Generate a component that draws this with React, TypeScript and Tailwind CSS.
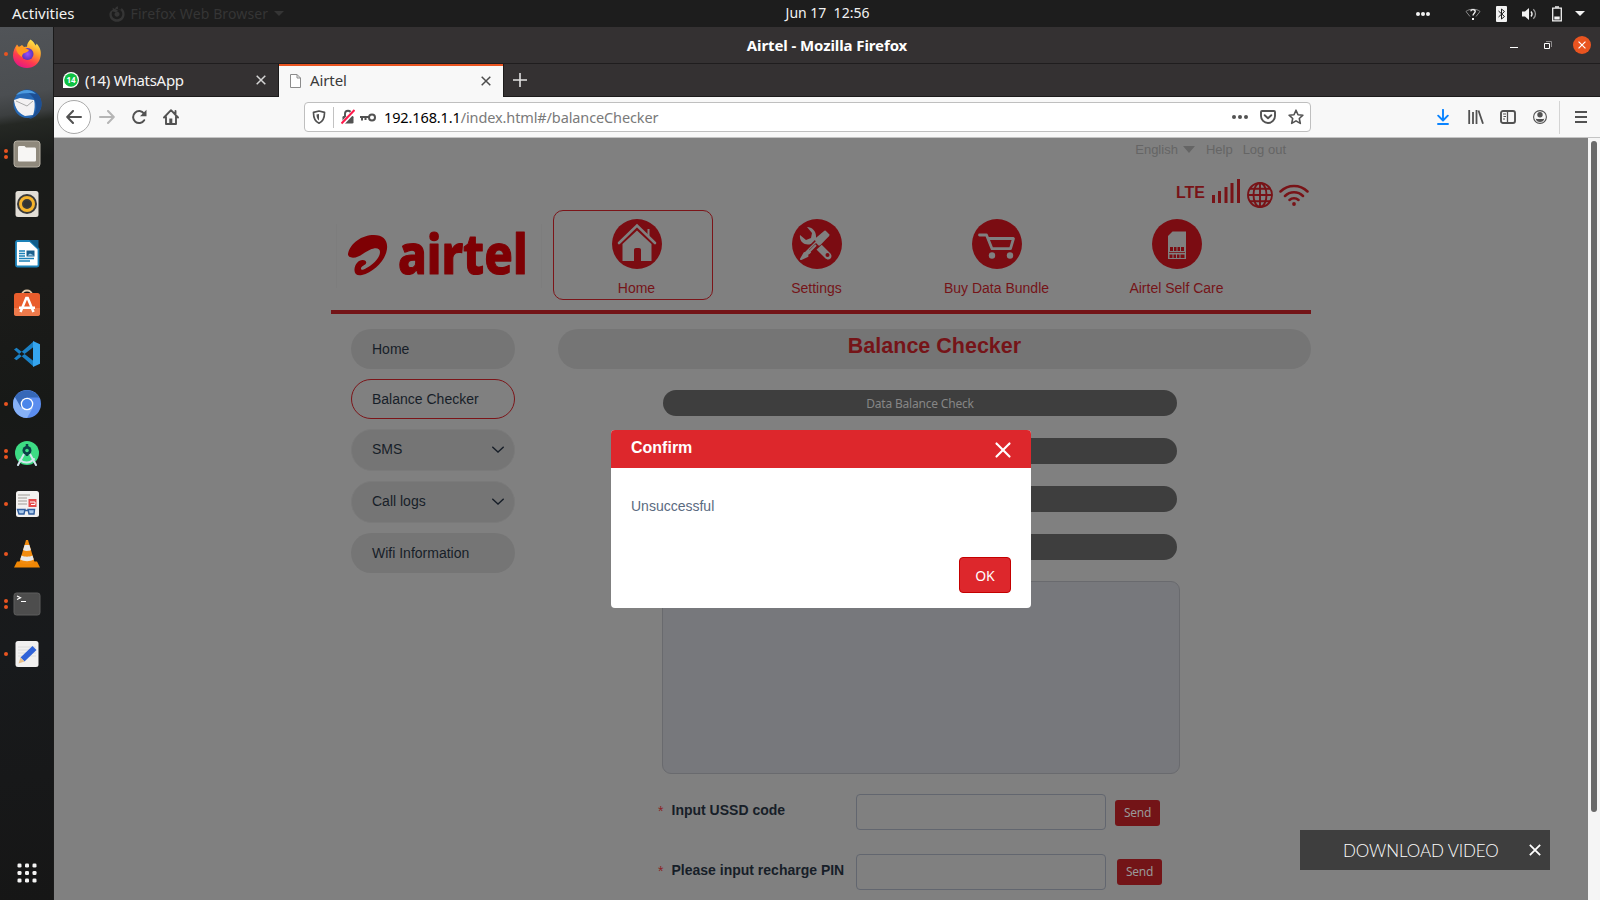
import type { ReactNode } from "react";
import { X } from "lucide-react";

const ubuntu = "font-['Noto_Sans','Open_Sans',sans-serif]";

function CloseGlyph({ className }: { className: string }) {
  return (
    <svg viewBox="0 0 10 10" className={className} fill="none" stroke="currentColor" strokeWidth="1.5">
      <path d="M.7.7l8.6 8.6M9.3.7L.7 9.3" />
    </svg>
  );
}

/* ---------- GNOME top bar ---------- */

function TopBar() {
  return (
    <header className={`grid h-[27px] grid-cols-[1fr_auto_1fr] items-center bg-[#1d1d1d] text-[#f2f2f2] ${ubuntu}`}>
      <div className="flex items-center pl-3">
        <span className="text-[15px] leading-none">Activities</span>
        <div className="ml-[34px] flex items-center text-[#353535]">
          <svg viewBox="0 0 16 16" className="h-4 w-4" fill="currentColor">
            <path fillRule="evenodd" d="M8.500 0c.5 1.200.6 2 .6 3.200 2.500.2 4.200 2 4.200 4.800 0 3-2.300 5.200-5.300 5.200S2.700 11 2.700 8c0-1 .3-2 .9-2.800L7 6.500 9 4 6 3.200C6.300 1.800 7.300.8 8.500 0zM3.500 1.800l.3 2C1.500 5 .4 6.500.4 8.500.4 12.700 3.800 15.800 8 15.800s7.600-3.200 7.600-7.600c0-2.600-1-4.600-3-6.200L12 3.800C10.500 3 8 3 6.500 3.200z M8 5.500C6.500 6 5.500 7 5.500 8.300c0 1.400 1.100 2.400 2.500 2.400s2.600-1 2.600-2.400C10.600 6.800 9.500 5.700 8 5.500z" />
          </svg>
          <span className="ml-[6px] text-[14px] leading-none tracking-[0.12px]">Firefox Web Browser</span>
          <svg viewBox="0 0 10 5" className="ml-[6px] h-[5px] w-[10px]" fill="currentColor">
            <path d="M0 0h10L5 5z" />
          </svg>
        </div>
      </div>
      <span className="pb-px pl-[55px] text-[14px] leading-none whitespace-pre">Jun 17  12:56</span>
      <div className="flex items-center justify-end">
        <svg viewBox="0 0 14 4" className="h-1 w-[14px]" fill="currentColor">
          <circle cx="2" cy="2" r="2" /><circle cx="7" cy="2" r="2" /><circle cx="12" cy="2" r="2" />
        </svg>
        <svg viewBox="0 0 16 14" className="ml-[35px] h-[14px] w-4" fill="none" stroke="currentColor">
          <path d="M5 9.500L1 4.500C3.800 1.500 12.200 1.500 15 4.500L11 9.500" stroke="#8a8a8a" />
          <path d="M5.800 4.200C6 2 10.300 2 10.200 4.500 10.100 6.200 8 6.200 8 8.500" strokeWidth="1.400" />
          <path d="M8 11v2" strokeWidth="2" />
        </svg>
        <svg viewBox="0 0 11 16" className="ml-[15px] h-4 w-[11px]">
          <rect width="11" height="16" rx="1" fill="#f2f2f2" />
          <path d="M2.500 5l6 5.500-3 2.500V3l3 2.500-6 5.500" fill="none" stroke="#1d1d1d" />
        </svg>
        <svg viewBox="0 0 15 14" className="ml-[15px] h-[14px] w-[15px]" fill="none" stroke="currentColor">
          <path d="M0 4.500h3L7 1v12L3 9.500H0z" fill="currentColor" stroke="none" />
          <path d="M9 4.500c1.300 1.500 1.300 3.500 0 5" strokeWidth="1.300" />
          <path d="M11.300 2.200c2.900 2.800 2.900 6.800 0 9.600" stroke="#9a9a9a" strokeWidth="1.300" />
        </svg>
        <svg viewBox="0 0 10 16" className="ml-[15px] h-4 w-[10px]" fill="none" stroke="currentColor">
          <path d="M.7 2.200h8.600v12.600H.7z" strokeWidth="1.300" />
          <path d="M3 1h4" strokeWidth="1.500" />
          <path d="M2.300 10.500h5.400v3H2.300z" fill="currentColor" stroke="none" />
        </svg>
        <svg viewBox="0 0 10 5" className="mr-[15px] ml-[13px] h-[5px] w-[10px]" fill="currentColor">
          <path d="M0 0h10L5 5z" />
        </svg>
      </div>
    </header>
  );
}

/* ---------- Dock ---------- */

function DockItem({ dots = 0, children }: { dots?: number; children: ReactNode }) {
  return (
    <div className="flex h-[50px] items-center">
      <div className="flex w-3 flex-col items-center gap-[2px]">
        {dots > 0 && <i className="h-1 w-1 rounded-full bg-[#e95420]" />}
        {dots > 1 && <i className="h-1 w-1 rounded-full bg-[#e95420]" />}
      </div>
      <svg viewBox="0 0 30 30" className="h-[30px] w-[30px]">{children}</svg>
    </div>
  );
}

function Dock() {
  return (
    <nav className="flex w-[54px] shrink-0 flex-col justify-between border-r border-[#1a1a1a] bg-[linear-gradient(172deg,#515458_0px,#4b4e51_68px,#3c3f40_88px,#252824_98px,#191b19_135px,#1b1b19_260px,#171917_380px,#191919_440px,#181a1c_620px,#161616_100%)] bg-[linear-gradient(170deg,#52555a_0px,#4b4e51_75px,#404344_88px,#262925_97px,#191b19_140px,#1b1b18_260px,#171816_380px,#191919_460px,#171a1c_640px,#161616_100%)] pt-[2px] pb-[17px]">
      <div>
        <DockItem dots={1}>
          <defs>
            <linearGradient id="fx" x1=".8" y1="0" x2=".3" y2="1">
              <stop offset="0" stopColor="#fff44f" /><stop offset=".4" stopColor="#ff9a2b" />
              <stop offset=".7" stopColor="#ff3b4e" /><stop offset="1" stopColor="#e31587" />
            </linearGradient>
            <radialGradient id="fp"><stop offset="0" stopColor="#9a4dff" /><stop offset="1" stopColor="#5a35b8" /></radialGradient>
          </defs>
          <path d="M18.500.5c3 2 4 4 5 6 1-1 1-2 1-2 4 4 5 9 4 13-1 7-7 11.500-13.500 11.500C7 29 1 23.500 1 16.500 1 12 3 8 5 5.500L7 8l3-2 2 2c2-.5 3-.3 3-.3C15 4.500 16.500 2.500 18.500.5z" fill="url(#fx)" />
          <circle cx="15.500" cy="15" r="6" fill="url(#fp)" />
          <path d="M4 8c4 0 6-1 9 1l4 2c-1 2-3 2-4 3-2 0-3 2-3 4-3-2-6-5-6-10z" fill="#ff9a1f" />
        </DockItem>
        <DockItem>
          <circle cx="15.500" cy="15" r="14" fill="#2668b4" />
          <path d="M12 1c9-2 17 4 17.500 13S23 29 17 30c6-4 8-9 7-15S18 4 12 1z" fill="#1d4f94" />
          <path d="M4 6C9 0 19-1 24 5c-6-2-14-1-20 1z" fill="#4c9be0" />
          <path d="M2 11L8 9l14 2c1 3 1 10-1 15l-8 1C6 24 3 19 2 11z" fill="#f3f1f2" />
          <path d="M4 12l11 5 6-5" stroke="#aaa" fill="none" />
        </DockItem>
        <DockItem dots={2}>
          <rect x="2" y="2" width="26" height="26" rx="3" fill="#8f897c" stroke="#b5afa3" />
          <path d="M6 8.500c0-1 .6-1.500 1.500-1.500h5l1.500 1.500h8.500c1 0 1.500.6 1.500 1.500v11c0 1-.6 1.500-1.500 1.500h-15C6.500 22.500 6 22 6 21z" fill="#f7f6f4" />
        </DockItem>
        <DockItem>
          <rect x="3.500" y="2" width="23" height="26" rx="2.500" fill="#e2ded6" />
          <circle cx="15" cy="15" r="10" fill="#3b3b3b" />
          <circle cx="15" cy="15" r="6.500" fill="none" stroke="#f6b42c" strokeWidth="3" />
          <circle cx="15" cy="15" r="3.200" fill="#333" />
        </DockItem>
        <DockItem>
          <path d="M5.500 2H18l8.500 8v16c0 1-.6 1.500-1.500 1.500H5.500C4.600 27.500 4 27 4 26V3.500C4 2.500 4.600 2 5.500 2z" fill="#fff" stroke="#1b81b8" strokeWidth="1.800" />
          <path d="M17 1h9.500v9z" fill="#0f5c8a" />
          <path d="M7 12h6M7 14.500h6M7 17h6M7 19.500h15M7 22h11" stroke="#1b81b8" strokeWidth="1.300" />
          <path d="M14.500 11.500h8v6h-8z" fill="#1b5f8c" />
          <path d="M15.500 16.500l2.500-2 4 2z" fill="#9fd0ec" />
        </DockItem>
        <DockItem>
          <path d="M10 6c0-6 10-6 10 0" fill="none" stroke="#e2c8a8" strokeWidth="1.800" />
          <rect x="2" y="4" width="26" height="23" rx="2.500" fill="#e95d2c" />
          <path d="M2 19h26v5.500c0 1.500-1 2.500-2.500 2.500h-21C3 27 2 26 2 24.500z" fill="#ee7a4b" />
          <path d="M8.500 23l5.800-14h1.400l5.800 14M7 18.800h16" fill="none" stroke="#fff" strokeWidth="2.500" />
        </DockItem>
        <DockItem>
          <path d="M2 10.500l2.500-1.800L21.500 22v5.500zM2 19.500l2.500 1.800L21.500 8V2.500z" fill="#1b80c4" />
          <path d="M21 2l7 3.300v19.400L21 28z" fill="#35a5ee" />
        </DockItem>
        <DockItem dots={1}>
          <circle cx="15" cy="15" r="14" fill="#5b8def" />
          <path d="M15 15L2.900 8A14 14 0 0015 29l6-10.500z" fill="#86b1f7" />
          <path d="M2.900 8A14 14 0 0127.100 8.500H15L9 18.500z" fill="#3668b8" />
          <circle cx="15" cy="15" r="6.300" fill="#fff" />
          <circle cx="15" cy="15" r="5" fill="#4a86ea" />
        </DockItem>
        <DockItem dots={2}>
          <circle cx="15" cy="14" r="12" fill="#3ddc84" />
          <path d="M6 26l6-11M24 26l-6-11M8 21c4 3.500 10 3.500 14-1" fill="none" stroke="#d5e6ee" strokeWidth="2" strokeLinecap="round" />
          <circle cx="15" cy="11.500" r="4.500" fill="#0a4047" />
          <path d="M15 5v12" stroke="#0a4047" strokeWidth="2.500" />
          <circle cx="15" cy="11.500" r="1.800" fill="#3ddc84" />
        </DockItem>
        <DockItem dots={1}>
          <rect x="4" y="2" width="23" height="26" rx="2.500" fill="#f3f1f0" />
          <path d="M6 6h12M6 9h9M6 12h9M6 15h9" stroke="#bcb8b4" strokeWidth="1.300" />
          <path d="M16.500 10h8v8h-8z" fill="#e64b4b" />
          <path d="M18 13h5v2.500h-4" stroke="#fff" fill="none" />
          <path d="M5.500 20.500H13l-1 4.500H7zM16 20.500h6.500L22 25h-5zM12.500 21.500h4" fill="#a9c8ea" stroke="#315e9e" strokeWidth="1.400" />
        </DockItem>
        <DockItem dots={1}>
          <path d="M5 22.500h20l3 6H2z" fill="#f08705" />
          <path d="M14 1h2l6.500 22c-3 3-12 3-15 0z" fill="#f28c0f" />
          <path d="M12.600 6h4.800l1.500 5c-2 1.200-5.800 1.200-7.800 0zM9.500 16.500c3 1.600 8 1.600 11 0l1.300 4c-4 2.300-9.500 2.300-13.600 0z" fill="#e8e8e8" />
        </DockItem>
        <DockItem dots={2}>
          <rect x="2" y="4" width="26" height="22" rx="2.500" fill="#4d4d4d" stroke="#5e5e5e" />
          <path d="M5 7l3.500 1.800L5 10.500M9 12.500h5" fill="none" stroke="#fff" strokeWidth="1.200" />
        </DockItem>
        <DockItem dots={1}>
          <rect x="3.500" y="2" width="23" height="26" rx="2.500" fill="#f1f0f0" />
          <path d="M6 8h18M6 11h18M6 14h18M6 17h18" stroke="#dcdcdc" />
          <path d="M8.500 18.500L20.500 7l4 4-12 11.500z" fill="#2f62d8" />
          <path d="M8.500 18.500l4 4-6 2z" fill="#e8c08a" />
        </DockItem>
      </div>
      <svg viewBox="0 0 20 20" className="ml-[17px] h-5 w-5" fill="#f4f4f4">
        <rect x=".5" y=".5" width="4" height="4" rx="1.300" /><rect x="8" y=".5" width="4" height="4" rx="1.300" /><rect x="15.500" y=".5" width="4" height="4" rx="1.300" />
        <rect x=".5" y="8" width="4" height="4" rx="1.300" /><rect x="8" y="8" width="4" height="4" rx="1.300" /><rect x="15.500" y="8" width="4" height="4" rx="1.300" />
        <rect x=".5" y="15.500" width="4" height="4" rx="1.300" /><rect x="8" y="15.500" width="4" height="4" rx="1.300" /><rect x="15.500" y="15.500" width="4" height="4" rx="1.300" />
      </svg>
    </nav>
  );
}

/* ---------- Firefox window ---------- */

function TitleBar() {
  return (
    <div className="grid h-[37px] grid-cols-[1fr_auto_1fr] items-center border-b border-[#1f1d1e] bg-[#343132] text-white">
      <span />
      <span className={`pt-px text-[15px] leading-none font-bold tracking-[-0.1px] ${ubuntu}`}>Airtel - Mozilla Firefox</span>
      <div className="flex items-center justify-end pr-[9px]">
        <i className="mt-1 h-px w-2 bg-white" />
        <svg viewBox="0 0 8 8" className="ml-[26px] h-2 w-2" fill="none">
          <path d="M2 .5h5.500V6" stroke="#8d8b8c" />
          <path d="M.5 2.500h5v5h-5z" stroke="#fff" />
        </svg>
        <div className="ml-[21px] flex h-[18px] w-[18px] items-center justify-center rounded-full bg-[#e95420]">
          <CloseGlyph className="h-2 w-2" />
        </div>
      </div>
    </div>
  );
}

function TabStrip() {
  return (
    <div className={`flex h-[33px] items-stretch bg-[#343132] text-[15px] leading-none ${ubuntu}`}>
      <div className="flex w-[225px] items-center border-r border-b border-[#1c1b1b] pl-[9px] text-[#f4f4f4]">
        <svg viewBox="0 0 16 16" className="h-4 w-4">
          <path d="M0 16V8a8 8 0 118 8z" fill="#fff" />
          <circle cx="8" cy="8" r="6.800" fill="#0fc143" />
          <text x="8" y="10.800" textAnchor="middle" fontSize="8" fontWeight="700" fill="#fff">14</text>
        </svg>
        <span className="ml-[6px] tracking-[-0.27px]">(14) WhatsApp</span>
        <CloseGlyph className="mr-3 ml-auto h-[10px] w-[10px] text-[#d5d5d5]" />
      </div>
      <div className="flex w-[224px] items-center border-t-2 border-[#e95420] bg-[#f8f8f8] pb-[2px] pl-[11px] text-[#3a3a3a]">
        <svg viewBox="0 0 11 14" className="h-[14px] w-[11px]" fill="#fff" stroke="#8c8c8c">
          <path d="M.5.500H7L10.500 4v9.500H.5zM7 .5V4h3.500" />
        </svg>
        <span className="ml-[9px] tracking-[-0.1px]">Airtel</span>
        <CloseGlyph className="mr-3 ml-auto h-[10px] w-[10px] text-[#4c4c4c]" />
      </div>
      <div className="flex flex-1 items-center border-b border-l border-[#1c1b1b] pl-[9px]">
        <svg viewBox="0 0 14 14" className="h-[14px] w-[14px]" stroke="#e2e2e2" strokeWidth="1.600"><path d="M7 0v14M0 7h14" /></svg>
      </div>
    </div>
  );
}

function Toolbar() {
  return (
    <div className="flex h-[41px] items-center border-b border-[#c4c4c4] bg-[#f8f8f8] text-[#525252]">
      <div className="ml-[3px] flex h-[34px] w-[34px] items-center justify-center rounded-full border border-[#a9a9a9] bg-white">
        <svg viewBox="0 0 16 14" className="h-[14px] w-4" fill="none" stroke="currentColor" strokeWidth="2" strokeLinecap="round" strokeLinejoin="round">
          <path d="M15 7H1.500M7 1L1.200 7 7 13" />
        </svg>
      </div>
      <svg viewBox="0 0 16 14" className="ml-2 h-[14px] w-4" fill="none" stroke="#b5b5b5" strokeWidth="2" strokeLinecap="round" strokeLinejoin="round">
        <path d="M1 7h13.500M9 1l5.800 6L9 13" />
      </svg>
      <svg viewBox="0 0 16 16" className="ml-4 h-4 w-4" fill="none" stroke="currentColor" strokeWidth="2" strokeLinecap="round">
        <path d="M13.200 11.200A6 6 0 1113 4.600" />
        <path d="M15.500.800v6.400H9z" fill="currentColor" stroke="none" />
      </svg>
      <svg viewBox="0 0 16 16" className="ml-4 h-4 w-4" fill="none" stroke="currentColor" strokeWidth="1.900" strokeLinejoin="round" strokeLinecap="round">
        <path d="M1 8.500L8 1.200l7 7.300M3 7.500V15h10V7.500M12.500 2v3" />
        <path d="M7.800 14.500V9.500" strokeWidth="3" strokeLinecap="butt" />
      </svg>

      <div className="ml-[125px] flex h-[30px] w-[1007px] items-center rounded-[4px] border border-[#bfbfbf] bg-white">
        <svg viewBox="0 0 14 14" className="ml-[7px] h-[14px] w-[14px]" fill="none" stroke="currentColor" strokeWidth="1.700">
          <path d="M7 1l5.500 1.300C12.600 8 11 11.500 7 13.200 3 11.500 1.400 8 1.500 2.300z" strokeLinejoin="round" />
          <path d="M7 4v6.400C5 9 4.500 7 4.500 4.500z" fill="currentColor" stroke="none" />
        </svg>
        <i className="ml-[7px] h-[21px] w-px bg-[#c2c2c2]" />
        <svg viewBox="0 0 14 16" className="ml-[7px] h-4 w-[14px]" fill="none">
          <rect x="1.500" y="7" width="11" height="7.500" rx="1.300" fill="#525252" />
          <path d="M4 7V4.800a3 3 0 016 0V7" stroke="#525252" strokeWidth="1.900" />
          <path d="M.5 15.500L13.500 1.500" stroke="#fff" strokeWidth="4" />
          <path d="M.5 14.500L13.500 1" stroke="#ff1a4b" strokeWidth="2" />
        </svg>
        <svg viewBox="0 0 16 9" className="ml-[5px] h-[9px] w-4" fill="none" stroke="currentColor" strokeWidth="2">
          <circle cx="12" cy="4.500" r="3" />
          <path d="M9 4H0M2 4v3.500M5.500 4v3" />
        </svg>
        <span className={`ml-2 text-[14.500px] leading-none tracking-[-0.12px] text-[#7a7a7a] ${ubuntu}`}>
          <span className="text-black">192.168.1.1</span><span>/index.html#/balanceChecker</span>
        </span>
        <svg viewBox="0 0 16 4" className="ml-auto h-1 w-4" fill="currentColor">
          <circle cx="2" cy="2" r="2" /><circle cx="8" cy="2" r="2" /><circle cx="14" cy="2" r="2" />
        </svg>
        <svg viewBox="0 0 16 14" className="ml-3 h-[14px] w-4" fill="none" stroke="currentColor" strokeWidth="1.900" strokeLinecap="round" strokeLinejoin="round">
          <path d="M2 1h12c.6 0 1 .4 1 1v4a7 7 0 01-14 0V2c0-.6.400-1 1-1z" />
          <path d="M4.700 5.200L8 8.300l3.300-3.100" />
        </svg>
        <svg viewBox="0 0 16 16" className="mr-[6px] ml-3 h-4 w-4" fill="none" stroke="currentColor" strokeWidth="1.600" strokeLinejoin="round">
          <path d="M8 1.200l2 4.500 4.900.5-3.600 3.300 1 4.900L8 11.900l-4.300 2.500 1-4.900L1.100 6.200 6 5.700z" />
        </svg>
      </div>

      <div className="ml-auto flex items-center pr-[13px]">
        <svg viewBox="0 0 12 16" className="h-4 w-3" fill="none" stroke="#0a84ff" strokeWidth="1.900" strokeLinecap="round" strokeLinejoin="round">
          <path d="M6 .8v10.500M1.200 6.700L6 11.500l4.800-4.800M1 15h10" />
        </svg>
        <svg viewBox="0 0 16 14" className="ml-[19px] h-[14px] w-4" stroke="currentColor" strokeWidth="1.800">
          <path d="M1.200 0v14M5 2v12M8.500 0v14M10.500.5L15 13.700" />
        </svg>
        <svg viewBox="0 0 16 14" className="ml-4 h-[14px] w-4" fill="none" stroke="currentColor">
          <rect x="1" y="1" width="14" height="12" rx="2" strokeWidth="1.900" />
          <path d="M7.500 1v12" strokeWidth="1.300" /><path d="M3 4h3M3.500 6.500H6M3 9h2" />
        </svg>
        <svg viewBox="0 0 14 14" className="ml-[17px] h-[14px] w-[14px]" fill="none" stroke="currentColor">
          <circle cx="7" cy="7" r="6.400" strokeWidth="1.100" />
          <circle cx="7" cy="4.800" r="2.700" fill="currentColor" stroke="none" />
          <path d="M2.700 8.500c1 .8 2.500.5 4.300.5s3.300.3 4.300-.5C11 11 9.200 12 7 12S3 11 2.700 8.500z" fill="currentColor" stroke="none" />
        </svg>
        <i className="ml-3 h-[33px] w-px bg-[#d4d4d4]" />
        <svg viewBox="0 0 12 12" className="ml-[15px] h-3 w-3" stroke="currentColor" strokeWidth="2"><path d="M0 1h12M0 6h12M0 11h12" /></svg>
      </div>
    </div>
  );
}

/* ---------- Router admin page ---------- */

function Logo() {
  return (
    <svg viewBox="0 0 206 64" className="h-16 w-[206px] overflow-visible text-[#7e0004]" fill="currentColor">
      <path d="M.5 0v64M205.500 0v64" stroke="#7b7b7b" strokeWidth=".6" />
      <path d="M12 30C14 19 26 11 38 11c9 0 14 5 13 14-1.500 12-14 23.500-25 26-5 1-8-1-7.500-6 .5-5 4-9 8-9 3.500 0 4.500 2 3.200 4-1.500 1.500-4.700 2.500-4.700 4.500 0 2 2.500 1.500 5-.2C37 40.500 44 34 44 28c0-4.500-5-4.500-10-2.300-6 2.500-10.500 8-17 8-3.500 0-5.200-1.500-5-3.700z" />
      <text x="62" y="49.800" textLength="129.500" lengthAdjust="spacingAndGlyphs" fontSize="56" fontWeight="800" stroke="currentColor" strokeWidth="1.200" strokeLinejoin="round" className={ubuntu}>airtel</text>
    </svg>
  );
}

function HomeIcon() {
  return (
    <svg viewBox="0 0 50 50" className="h-[50px] w-[50px]">
      <circle cx="25" cy="25" r="25" fill="#7b0c12" />
      <path d="M7 24L25 6.500 43 24" fill="none" stroke="#808080" strokeWidth="2.600" strokeLinecap="round" />
      <path d="M35.500 16v-6h2v8z" fill="#808080" />
      <path d="M10.500 25L25 11.500 39.500 25v17H29V31c0-1.200-.8-2-2-2h-3c-1.200 0-2 .8-2 2v11H10.500z" fill="#808080" />
    </svg>
  );
}
function SettingsIcon() {
  return (
    <svg viewBox="0 0 50 50" className="h-[50px] w-[50px]">
      <circle cx="25" cy="25" r="25" fill="#7b0c12" />
      <path d="M15 8c5 0 9 4 9 9v3l14 14c4 4-1 9-5 5L19 25c-6 2-12-2-11-9l6 5 5-2 1-5z" fill="#808080" />
      <circle cx="35.500" cy="36" r="2" fill="#7b0c12" />
      <path d="M9 40l3-7L33 12l5 5-20.500 19z" fill="#808080" stroke="#7b0c12" strokeWidth="1.500" />
      <path d="M17 31l7-7 3 3-7.500 7z" fill="#7b0c12" />
      <path d="M23.500 20.500L33 12.500l3.500 3.500-9 9.500zM9 40l3.500-6 3 3zM14 36l10-10" fill="#808080" stroke="#808080" strokeWidth="2" strokeLinejoin="round" />
    </svg>
  );
}
function CartIcon() {
  return (
    <svg viewBox="0 0 50 50" className="h-[50px] w-[50px]">
      <circle cx="25" cy="25" r="25" fill="#7b0c12" />
      <path d="M7.500 16h7L20 29.700h18.500L41.500 19.500H17" fill="none" stroke="#808080" strokeWidth="2.800" strokeLinecap="round" strokeLinejoin="round" />
      <circle cx="20" cy="36.500" r="3.200" fill="#808080" /><circle cx="38" cy="36.500" r="3.200" fill="#808080" />
    </svg>
  );
}
function SimIcon() {
  return (
    <svg viewBox="0 0 50 50" className="h-[50px] w-[50px]">
      <circle cx="25" cy="25" r="25" fill="#7b0c12" />
      <path d="M16 17l4.500-4.500H34V40H16z" fill="#808080" />
      <path d="M18 28h14v4H18zM17.500 35.500h15v3.500h-15z" fill="#7b0c12" />
      <path d="M21.500 28v4M25 28v4M28.500 28v4M21 35v4M24.500 35v4M28 35v4" stroke="#808080" />
      <path d="M17 33.500h16" stroke="#7b0c12" strokeWidth=".8" />
    </svg>
  );
}

const navItems = [
  { label: "Home", icon: <HomeIcon />, active: true },
  { label: "Settings", icon: <SettingsIcon />, active: false },
  { label: "Buy Data Bundle", icon: <CartIcon />, active: false },
  { label: "Airtel Self Care", icon: <SimIcon />, active: false },
];

const sideItems = [
  { label: "Home", kind: "plain" },
  { label: "Balance Checker", kind: "active" },
  { label: "SMS", kind: "menu" },
  { label: "Call logs", kind: "menu" },
  { label: "Wifi Information", kind: "plain" },
];

const sideStyles: Record<string, string> = {
  plain: "h-10 bg-[#757575]",
  active: "h-10 border border-[#7c1519]",
  menu: "h-[42px] border border-[#7a7a7a] bg-[#757575] pb-[2px]",
};

function StatusIcons() {
  return (
    <div className="flex h-[27px] items-center text-[#781317]">
      <span className="pb-[4px] text-[16px] leading-none font-bold">LTE</span>
      <svg viewBox="0 0 28 24" className="mb-[7px] ml-[7px] h-6 w-7" fill="currentColor">
        <path d="M0 16h3v8H0zM6 12h3v12H6zM12.500 8h3v16h-3zM18.500 4h3v20h-3zM25 0h3v24h-3z" />
      </svg>
      <svg viewBox="0 0 26 26" className="ml-[7px] h-[26px] w-[26px]" fill="none" stroke="currentColor" strokeWidth="1.900">
        <circle cx="13" cy="13" r="12" /><ellipse cx="13" cy="13" rx="6.500" ry="12" />
        <path d="M13 1v24M1 13h24M3 6.800h20M3 19.200h20" />
      </svg>
      <svg viewBox="0 0 30 22" className="ml-[6px] h-[22px] w-[30px]" fill="none" stroke="currentColor" strokeWidth="2.500" strokeLinecap="round">
        <path d="M1.500 7.500C9 0 21 0 28.500 7.500M6 12c5-5 13-5 18 0M10.500 16c2.500-2.300 6.500-2.300 9 0" />
        <circle cx="15" cy="20" r="1.900" fill="currentColor" stroke="none" />
      </svg>
    </div>
  );
}

function PageHeader() {
  return (
    <div className="border-b-4 border-[#731417]">
      <div className="flex h-[22px] items-center justify-end pr-[25px] text-[13px] leading-none text-[#656565]">
        <span>English</span>
        <svg viewBox="0 0 12 7" className="mr-[11px] ml-[5px] h-[7px] w-3" fill="currentColor"><path d="M0 0h12L6 7z" /></svg>
        <span className="mr-[10px]">Help</span>
        <span>Log out</span>
      </div>
      <div className="mt-[21px] flex h-[27px] justify-end pr-[2px]"><StatusIcons /></div>
      <div className="mt-[2px] flex h-[100px]">
        <div className="pt-[14px] pl-[5px]"><Logo /></div>
        <div className="ml-[11px] flex gap-5">
          {navItems.map((item) => (
            <div key={item.label} className={`flex h-[90px] w-40 flex-col items-center rounded-[10px] border pl-[7px] text-[14px] leading-none text-[#751418] ${item.active ? "border-[#7c1519]" : "border-transparent"}`}>
              <div className="pt-2">{item.icon}</div>
              <span className="mt-[12px]">{item.label}</span>
            </div>
          ))}
        </div>
      </div>
    </div>
  );
}

function Sidebar() {
  return (
    <div className="ml-5 flex w-[164px] flex-col gap-[10px] text-[14px] leading-none text-[#171e28]">
      {sideItems.map((item) => (
        <div key={item.label} className={`flex items-center justify-between rounded-[21px] pr-[10px] ${item.kind === "plain" ? "pl-[21px]" : "pl-5"} ${sideStyles[item.kind]}`}>
          <span>{item.label}</span>
          {item.kind === "menu" && (
            <svg viewBox="0 0 12 7" className="h-[7px] w-3" fill="none" stroke="currentColor" strokeWidth="1.300"><path d="M.3.8L6 6 11.700.8" /></svg>
          )}
        </div>
      ))}
    </div>
  );
}

function FormRow({ label, offset }: { label: string; offset: string }) {
  return (
    <div className="flex h-9 items-center">
      <span className="w-[13.500px] pb-[2px] text-[14px] leading-none text-[#8c2224]">*</span>
      <span className="w-[184.500px] pb-[4px] text-[14px] leading-none font-bold text-[#171e28]">{label}</span>
      <div className="h-9 w-[250px] rounded-[4px] border border-[#62666f]" />
      <button className={`h-[26px] w-[45px] rounded-[3px] bg-[#731417] pb-px text-[12px] leading-none tracking-[-0.3px] text-[#999] ${ubuntu} ${offset}`}>Send</button>
    </div>
  );
}

function Main() {
  return (
    <div className="ml-[43px] w-[753px]">
      <h1 className="flex h-10 items-center justify-center rounded-full bg-[#757575] pb-[5px] text-[21.500px] leading-none font-bold text-[#751418]">Balance Checker</h1>
      <div className="mt-[21px] ml-[105px] flex w-[514px] flex-col gap-[22px]">
        {["Data Balance Check", "", "", ""].map((label, i) => (
          <button key={i} className={`h-[26px] rounded-full bg-[#3e3e3e] pt-[2px] text-[12px] leading-none tracking-[-0.2px] text-[#868686] ${ubuntu}`}>{label}</button>
        ))}
      </div>
      <div className="mt-[21px] ml-[104px] h-[193px] w-[518px] rounded-[9px] border border-[#696a6e] bg-[#77787c]" />
      <div className="mt-5 ml-[100px] flex flex-col gap-6">
        <FormRow label="Input USSD code" offset="ml-[9px] mt-[2px]" />
        <FormRow label="Please input recharge PIN" offset="ml-[11px]" />
      </div>
    </div>
  );
}

function Dialog() {
  return (
    <div className="absolute top-[292px] left-[557px] h-[178px] w-[420px] overflow-hidden rounded-[4px] bg-white">
      <div className="flex h-[38px] items-center justify-between bg-[#dd272c] px-5 text-white">
        <span className="pb-[2px] text-[16px] leading-none font-bold">Confirm</span>
        <X className="mt-[2px] -mr-[5px] h-[26px] w-[26px]" strokeWidth={2} />
      </div>
      <p className="mt-[31px] ml-5 text-[14px] leading-none text-[#5a6a80]">Unsuccessful</p>
      <button className={`mt-[44px] ml-[348px] h-9 w-[52px] rounded-[4px] border border-[#c40000] bg-[#dd272c] pt-[2px] text-[14px] leading-none text-white ${ubuntu}`}>OK</button>
    </div>
  );
}

function DownloadPanel() {
  return (
    <div className="absolute top-[692px] left-[1246px] flex h-10 w-[250px] items-center bg-[#3e3e3e] pl-[43px] text-white">
      <span className="font-['Lato',sans-serif] text-[17px] leading-none font-light tracking-[-0.1px]">DOWNLOAD VIDEO</span>
      <CloseGlyph className="mr-[9px] ml-auto h-3 w-3" />
    </div>
  );
}

export default function App() {
  return (
    <div className="flex h-[900px] w-[1600px] flex-col overflow-hidden font-['Liberation_Sans',Arial,sans-serif]">
      <TopBar />
      <div className="flex min-h-0 flex-1">
        <Dock />
        <div className="flex min-w-0 flex-1 flex-col">
          <TitleBar />
          <TabStrip />
          <Toolbar />
          <div className="relative flex min-h-0 flex-1 bg-[#808080]">
            <div className="ml-[277px] w-[980px] overflow-hidden">
              <PageHeader />
              <div className="mt-[15px] flex">
                <Sidebar />
                <Main />
              </div>
            </div>
            <div className="ml-auto w-3 bg-[#f5f5f5] pt-[3px] pl-[3px]">
              <div className="h-[671px] w-[6px] rounded-full bg-[#696969]" />
            </div>
            <Dialog />
            <DownloadPanel />
          </div>
        </div>
      </div>
    </div>
  );
}
